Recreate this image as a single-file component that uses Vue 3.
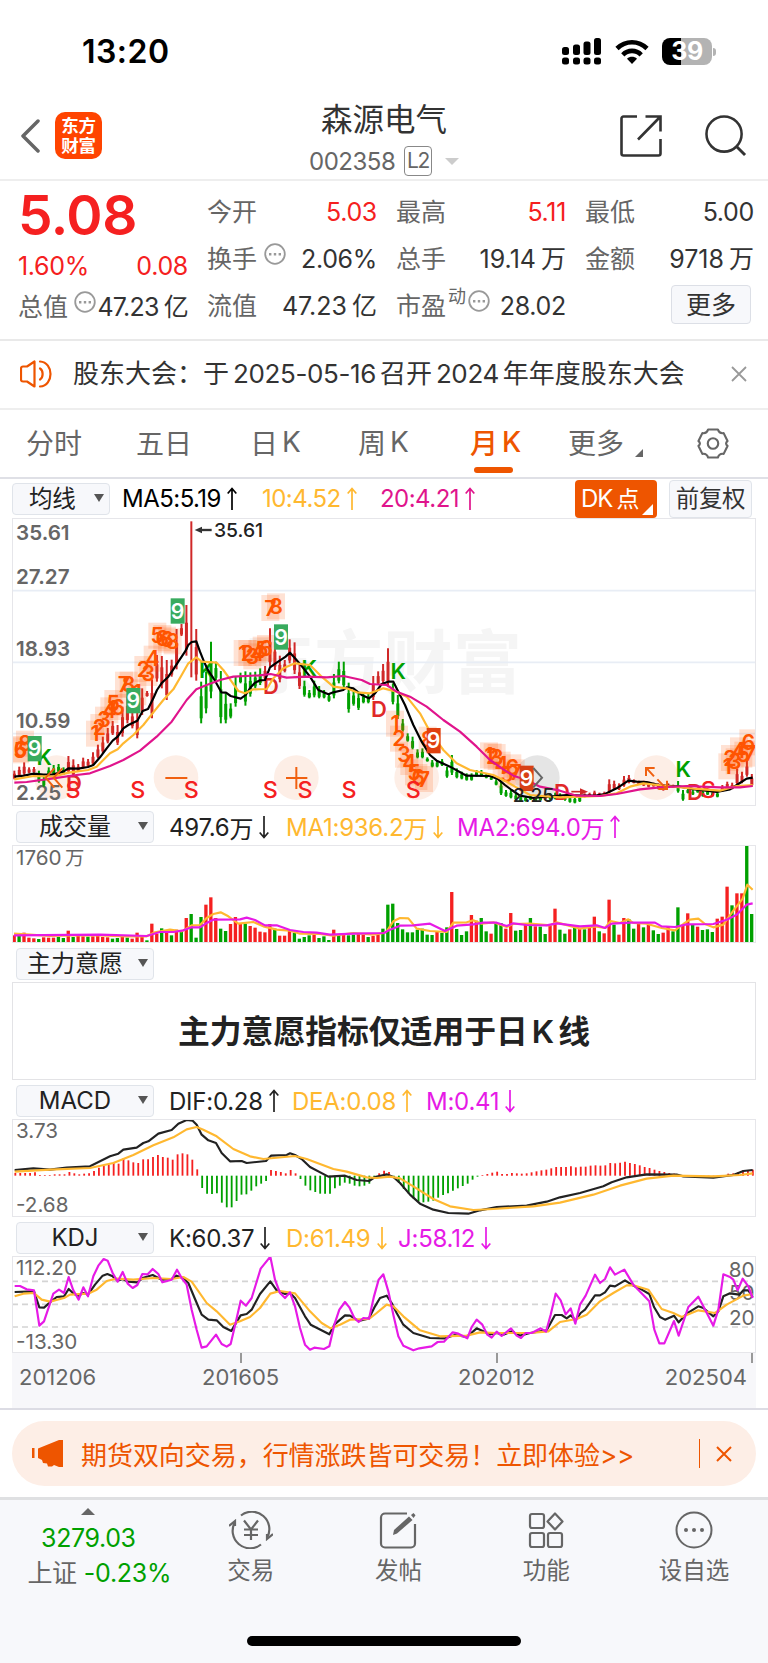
<template>
    <div class="page">
        <div class="statusBar">
            <span class="clock">13:20</span>
            <div class="statusIcons">
                <svg class="signal" viewBox="0 0 39 27">
                    <rect x="0" y="9" width="7" height="8" rx="2.5" />
                    <rect x="11" y="6.5" width="7" height="10.5" rx="2.5" />
                    <rect x="21.500" y="3.500" width="7" height="13.500" rx="2.5" />
                    <rect x="32" y="0" width="7" height="17" rx="2.5" />
                    <rect v-for="x in [0, 11, 21.5, 32]" :key="x" :x="x" y="19.5" width="7" height="7" rx="2.5" />
                </svg>
                <svg class="wifi" viewBox="0 0 34 26" fill="none" stroke="#000" stroke-width="4.600">
                    <path d="M2 9.500C10.500 1.200 23.500 1.200 32 9.500" />
                    <path d="M7.800 15.800C13 10.500 21 10.500 26.200 15.800" />
                    <path d="M17 25l-5-5.300c2.800-2.600 7.200-2.600 10 0z" fill="#000" stroke="none" />
                </svg>
                <div class="battery"><span>39</span></div>
                <i class="batteryCap"></i>
            </div>
        </div>

        <header>
            <svg class="back" viewBox="0 0 20 34"><path d="M18 2L3 17l15 15" fill="none" stroke="#666" stroke-width="3.500" stroke-linecap="round" stroke-linejoin="round" /></svg>
            <div class="logo"><span>东方</span><span>财富</span></div>
            <div class="stockTitle">
                <h1>森源电气</h1>
                <div class="stockCode">
                    <span class="codeText">002358</span>
                    <span class="level">L2</span>
                    <i class="triDown"></i>
                </div>
            </div>
            <svg class="share" viewBox="0 0 42 42" fill="none" stroke="#333" stroke-width="2.600">
                <path d="M17 1.500H3.500a2 2 0 0 0-2 2v35a2 2 0 0 0 2 2h35a2 2 0 0 0 2-2V24" />
                <path d="M25.500 1.500h15v15M40 2L18 24.500" />
            </svg>
            <svg class="search" viewBox="0 0 43 43" fill="none" stroke="#333" stroke-width="2.600">
                <circle cx="19.500" cy="19.500" r="18" />
                <path d="M32 32l9 9" stroke-width="3" />
            </svg>
        </header>

        <section class="quote">
            <div class="quoteCol main">
                <strong class="price">5.08</strong>
                <div class="change red"><span>1.60%</span><span>0.08</span></div>
                <div class="cell">
                    <label>总值</label>
                    <svg class="dots" viewBox="0 0 22 22"><circle cx="11" cy="11" r="9.800" fill="none" stroke="#999" stroke-width="1.800" /><path d="M5 10h2.400v2.400H5zM9.800 10h2.400v2.400H9.800zM14.600 10H17v2.400h-2.400z" fill="#999" /></svg>
                    <span class="val">47.23<b>亿</b></span>
                </div>
            </div>
            <div class="quoteCol" v-for="(col, index) in quotes" :key="index">
                <div class="cell" v-for="item in col" :key="item.label">
                    <label>{{ item.label }}</label>
                    <small v-if="item.sup">{{ item.sup }}</small>
                    <svg v-if="item.tip" class="dots" viewBox="0 0 22 22"><circle cx="11" cy="11" r="9.800" fill="none" stroke="#999" stroke-width="1.800" /><path d="M5 10h2.400v2.400H5zM9.800 10h2.400v2.400H9.800zM14.600 10H17v2.400h-2.400z" fill="#999" /></svg>
                    <span class="val" :class="{ red: item.red, wide: item.unit }">{{ item.value }}<b v-if="item.unit">{{ item.unit }}</b></span>
                </div>
                <button v-if="index === 2" class="moreBtn">更多</button>
            </div>
        </section>

        <section class="notice">
            <svg class="horn" viewBox="0 0 32 28" fill="none" stroke="#ee5500" stroke-width="2.200" stroke-linejoin="round" stroke-linecap="round">
                <path d="M14.500 1.500v25L7 21.500H3a2 2 0 0 1-2-2v-11a2 2 0 0 1 2-2h4z" />
                <path d="M20 8.500c3.500 2 3.500 9 0 11M20 1.500c14 1 14 24 0 25" />
            </svg>
            <p>股东大会：<span>于</span><em>2025-05-16</em>召开<em>2024</em>年年度股东大会</p>
            <svg class="close" viewBox="0 0 16 16"><path d="M1 1l14 14M15 1L1 15" stroke="#999" stroke-width="1.800" /></svg>
        </section>

        <nav>
            <span class="tab" v-for="tab in tabs" :key="tab.name" :class="[tab.cls, { active: tab.name === activeTab }]" @click="activeTab = tab.name">
                {{ tab.name }}<i v-if="tab.k">K</i>
                <svg v-if="tab.corner" viewBox="0 0 8 8"><path d="M8 0v8H0z" fill="#666" /></svg>
            </span>
            <svg class="gear" viewBox="0 0 32 32" fill="none" stroke="#666" stroke-width="2.200">
                <path d="M11 1.500h10c1 3 3 4.300 6 3.800l4 8.200c-2 1.500-2 3.500 0 5l-4 8.200c-3-.5-5 .8-6 3.800H11c-1-3-3-4.300-6-3.800l-4-8.200c2-1.500 2-3.500 0-5l4-8.200c3 .5 5-.8 6-3.800z" stroke-linejoin="round" />
                <circle cx="16" cy="16" r="5.400" />
            </svg>
        </nav>

        <section class="indicator top">
            <div class="select">均线<i></i></div>
            <div class="values">
                <span v-for="v in maValues" :key="v.text" :class="v.cls">{{ v.text }}
                    <svg class="arrow" viewBox="0 0 10 24"><path :d="v.up ? upArrow : downArrow" /></svg>
                </span>
            </div>
            <div class="dk">DK<b>点</b><svg viewBox="0 0 10 10"><path d="M10 0v10H0z" fill="#fff" /></svg></div>
            <div class="restore">前复权</div>
        </section>

        <!-- price chart, three units per pixel -->
        <svg class="chart price" viewBox="36 24 2232 864">
            <text class="watermark" x="1566" y="534" text-anchor="end">东方财富</text>
            <path d="M36 242H2268M36 457H2268M36 671H2268" stroke="#e8edf5" stroke-width="5" />
            <circle v-for="x in [170, 528, 889, 1250, 1969]" :key="x" :cx="x" cy="803" r="67" fill="#fdeee6" />
            <circle cx="1612" cy="803" r="67" fill="#e5e5e5" />
            <g class="axisText">
                <text v-for="(p, i) in priceLabels" :key="p" x="48" :y="[89, 222, 439, 655, 870][i]">{{ p }}</text>
            </g>
            <path v-for="(c, i) in candles" :key="i" :d="`M${candleX(i)} ${c.top}V${c.bottom}`" :stroke="c.color" stroke-width="6" />
            <path v-for="(c, i) in candles" :key="'b' + i" :d="`M${candleX(i)} ${c.top + (c.bottom - c.top) * .35}V${c.bottom - (c.bottom - c.top) * .12}`" :stroke="c.color" stroke-width="9" v-show="i !== 36" />
            <g v-for="(m, i) in counts" :key="'n' + i">
                <rect :x="m[0] - 27" :y="m[1] - 40" width="54" height="78" fill="#ff5500" opacity=".17" />
                <text class="count" :x="m[0]" :y="m[1] + 22">{{ m[2] }}</text>
            </g>
            <g class="letters">
                <text v-for="(m, i) in letters" :key="'l' + i" :x="m[0]" :y="m[1] + 24" :class="m[2]">{{ m[2] }}</text>
            </g>
            <polyline class="ma black" :points="ma5" />
            <polyline class="ma gold" :points="ma10" />
            <polyline class="ma pink" :points="ma20" />
            <g v-for="(m, i) in nines" :key="'g' + i">
                <rect :x="m[0] - 21" :y="m[1] - 38" width="42" height="76" :fill="m[2]" />
                <text class="nine" :x="m[0]" :y="m[1] + 23">9</text>
            </g>
            <g fill="none" stroke="#f06010" stroke-width="6">
                <path d="M496 804h66M858 804h64M889 771v66M163 775l-26 28 26 30M187 775l-26 28 26 30" />
                <path d="M1962 799l-22-24M1938 798v-24h26M1972 808l27 28M2001 812v25h-26" />
            </g>
            <path d="M1600 774l26 29-26 29" fill="none" stroke="#666" stroke-width="6" />
            <path d="M1714 845h30" stroke="#d02828" stroke-width="5" />
            <path d="M1740 835l24 10-24 10z" fill="#d02828" />
            <path d="M600 60h35" stroke="#333" stroke-width="7" />
            <path d="M584 60l22-10v20z" fill="#333" />
            <text class="extreme" x="642" y="81">35.61</text>
            <text class="extreme" x="1538" y="877">2.25</text>
        </svg>

        <section class="indicator">
            <div class="select wide">成交量<i></i></div>
            <div class="values vol">
                <span v-for="v in volValues" :key="v.text" :class="v.cls">{{ v.text }}<b>万</b>
                    <svg class="arrow" viewBox="0 0 10 24"><path :d="v.up ? upArrow : downArrow" /></svg>
                </span>
            </div>
        </section>
        <svg class="chart volume" viewBox="36 121 2232 294">
            <text class="axisText" x="48" y="182">1760<tspan class="cjk" dx="10">万</tspan></text>
            <rect v-for="(v, i) in volumes" :key="i" :x="37.500 + i * 14.750" :y="v.y" width="10" :height="415 - v.y" :fill="v.color" />
            <polyline class="ma gold" :points="volMa1" />
            <polyline class="ma magenta" :points="volMa2" />
        </svg>

        <section class="indicator">
            <div class="select wide">主力意愿<i></i></div>
        </section>
        <div class="message">主力意愿指标仅适用于日<span>K</span>线</div>

        <section class="indicator">
            <div class="select wide">MACD<i></i></div>
            <div class="values macdValues">
                <span v-for="v in macdValues" :key="v.text" :class="v.cls">{{ v.text }}
                    <svg class="arrow" viewBox="0 0 10 24"><path :d="v.up ? upArrow : downArrow" /></svg>
                </span>
            </div>
        </section>
        <svg class="chart macd" viewBox="36 118 2232 294">
            <path v-for="(y, i) in macdBars" :key="i" :d="`M${46 + i * 14.75} 288V${y}`" :stroke="y > 288 ? '#00a000' : '#f52020'" stroke-width="5.500" />
            <polyline class="ma dark" :points="dif" />
            <polyline class="ma gold" :points="dea" />
            <text class="axisText" x="48" y="176">3.73</text>
            <text class="axisText" x="48" y="397">-2.68</text>
        </svg>

        <section class="indicator">
            <div class="select wide">KDJ<i></i></div>
            <div class="values kdjValues">
                <span v-for="v in kdjValues" :key="v.text" :class="v.cls">{{ v.text }}
                    <svg class="arrow" viewBox="0 0 10 24"><path :d="v.up ? upArrow : downArrow" /></svg>
                </span>
            </div>
        </section>
        <svg class="chart kdj" viewBox="36 529 2232 291">
            <path d="M36 605H2268M36 674H2268M36 742H2268" stroke="#d4d4d4" stroke-width="5" stroke-dasharray="18 12" />
            <text class="axisText" x="48" y="586">112.20</text>
            <text class="axisText" x="48" y="808">-13.30</text>
            <g class="axisText" text-anchor="end">
                <text x="2264" y="592">80</text>
                <text x="2264" y="662">50</text>
                <text x="2264" y="735">20</text>
            </g>
            <polyline class="ma dark" :points="kLine" />
            <polyline class="ma gold" :points="dLine" />
            <polyline class="ma magenta" :points="jLine" />
        </svg>
        <div class="dates">
            <span>201206</span>
            <span class="tick">201605</span>
            <span class="tick">202012</span>
            <span class="tick last">202504</span>
        </div>

        <div class="promoWrap">
            <div class="promo">
                <svg class="megaphone" viewBox="0 0 31 27" fill="#ee5500">
                    <path d="M0 8h2.500v10H0zM6 8.500L27 0h4v27h-4l-5-2-2 1.500h-4l-1-3-4-.5-1-3-4-2z" />
                </svg>
                <p>期货双向交易，行情涨跌皆可交易！立即体验&gt;&gt;</p>
                <i class="divider"></i>
                <svg class="close" viewBox="0 0 16 16"><path d="M1 1l14 14M15 1L1 15" stroke="#ee5500" stroke-width="2" /></svg>
            </div>
        </div>

        <footer>
            <div class="bottomBar">
                <div class="index">
                    <i class="triUp"></i>
                    <span class="green points">3279.03</span>
                    <span class="percent">上证<em>-0.23%</em></span>
                </div>
                <div class="action">
                    <svg viewBox="0 0 44 38" fill="none" stroke="#666" stroke-width="2.200">
                        <path d="M12 4.500A17.500 17.500 0 0 1 38 27M32 33.500A17.500 17.500 0 0 1 6 11" />
                        <path d="M0 15l6-5v5M44 23l-6 5v-5" />
                        <path d="M15 9.500l7 9 7-9M22 18.500V29M15 18.500h14M15 24h14" />
                    </svg>
                    <span>交易</span>
                </div>
                <div class="action">
                    <svg viewBox="0 0 44 38" fill="none" stroke="#666" stroke-width="2.200">
                        <path d="M31 2.500H9a4 4 0 0 0-4 4v26a4 4 0 0 0 4 4h26a4 4 0 0 0 4-4V13" />
                        <path d="M17 24l1-5L33 5.500l3.500 3.500L21 22.500z" fill="#666" stroke="none" />
                        <path d="M35 4l2.500-2 2 2.200L37.500 7z" fill="#666" stroke="none" />
                    </svg>
                    <span>发帖</span>
                </div>
                <div class="action">
                    <svg viewBox="0 0 44 38" fill="none" stroke="#666" stroke-width="2.200">
                        <rect x="6" y="3" width="14" height="14" rx="2" />
                        <rect x="6" y="22" width="14" height="14" rx="2" />
                        <rect x="24" y="22" width="14" height="14" rx="2" />
                        <path d="M31 2.500l7.500 8-7.500 8-7.500-8z" stroke-linejoin="round" />
                    </svg>
                    <span>功能</span>
                </div>
                <div class="action">
                    <svg viewBox="0 0 44 38" fill="none" stroke="#666" stroke-width="2">
                        <circle cx="22" cy="19" r="17.500" />
                        <g fill="#666" stroke="none"><circle cx="14" cy="19" r="2" /><circle cx="22" cy="19" r="2" /><circle cx="30" cy="19" r="2" /></g>
                    </svg>
                    <span>设自选</span>
                </div>
            </div>
            <div class="homeIndicator"></div>
        </footer>
    </div>
</template>

<script setup>
    import { ref } from 'vue';

    const RED = '#d02828';
    const GREEN = '#00a000';

    const upArrow = 'M5 23V1.500M.7 6.500L5 1.500l4.300 5';
    const downArrow = 'M5 1v21.500M.7 17.500L5 22.500l4.300-5';

    const quotes = [
        [
            { label: '今开', value: '5.03', red: true },
            { label: '换手', value: '2.06%', tip: true },
            { label: '流值', value: '47.23', unit: '亿' }
        ],
        [
            { label: '最高', value: '5.11', red: true },
            { label: '总手', value: '19.14', unit: '万' },
            { label: '市盈', sup: '动', value: '28.02', tip: true }
        ],
        [
            { label: '最低', value: '5.00' },
            { label: '金额', value: '9718', unit: '万' }
        ]
    ];

    const activeTab = ref('月');
    const tabs = [
        { name: '分时', cls: 't1' },
        { name: '五日', cls: 't2' },
        { name: '日', k: true, cls: 't3' },
        { name: '周', k: true, cls: 't4' },
        { name: '月', k: true, cls: 't5' },
        { name: '更多', corner: true, cls: 't6' }
    ];

    const maValues = [
        { text: 'MA5:5.19', cls: 'black', up: true },
        { text: '10:4.52', cls: 'gold', up: true },
        { text: '20:4.21', cls: 'pink', up: true }
    ];
    const volValues = [
        { text: '497.6', cls: 'dark', up: false },
        { text: 'MA1:936.2', cls: 'gold', up: false },
        { text: 'MA2:694.0', cls: 'magenta', up: true }
    ];
    const macdValues = [
        { text: 'DIF:0.28', cls: 'dark', up: true },
        { text: 'DEA:0.08', cls: 'gold', up: true },
        { text: 'M:0.41', cls: 'magenta', up: false }
    ];
    const kdjValues = [
        { text: 'K:60.37', cls: 'dark', up: false },
        { text: 'D:61.49', cls: 'gold', up: false },
        { text: 'J:58.12', cls: 'magenta', up: false }
    ];

    const priceLabels = ['35.61', '27.27', '18.93', '10.59', '2.25'];

    // high-low range of each month; r = up, g = down
    const candleData = `782-808r 770-798r 757-795r 772-790r 771-788r 782-818g 795-830g 772-800g 765-795g 762-788g 772-795g
        738-790r 748-800r 762-785r 743-775r 747-770r 727-765r 704-745r 680-730r 654-700r 633-675r 645-705r 590-680r 560-640r
        600-655r 600-685r 535-615r 543-560r 508-625r 435-515r 438-535r 450-570r 449-500r 357-478r 342-378r 285-437r 34-502r
        357-512r 515-640g 485-610g 395-565g 455-510g 483-640g 550-640g 580-625g 500-590g 488-520g 484-587g 487-560g 485-535g
        475-525g 468-510r 355-470r 395-480r 437-517r 450-487r 388-460r 397-492r 460-537r 512-560g 540-565g 512-562g 528-565g
        540-565g 550-575g 492-565g 455-520g 455-535g 518-608g 540-587g 545-600g 550-580g 550-580g 498-570r 484-525r 462-520r
        415-530r 520-583g 555-627g 627-665g 670-695g 680-718g 718-745g 715-745g 742-755g 750-772g 750-772g 747-768g 770-803g
        735-795g 775-805g 785-808g 790-812g 790-812g 780-800g 780-800g 790-805g 798-810g 808-826g 812-855g 840-860g 840-865g
        850-870g 855-875g 858-875g 855-870g 860-875g 858-872g 855-868r 850-870g 848-868g 850-866g 855-872g 858-878g 860-880g
        855-876g 850-862r 848-860r 842-858r 848-856r 845-858r 808-850r 812-840r 820-840r 798-830r 795-820r 808-820r 812-825r
        812-828r 815-832r 818-830r 820-838r 823-842r 820-832r 824-834r 813-848g 840-872g 835-850g 840-855g 838-848g 838-860g
        840-855g 845-860g 845-862g 825-845r 815-835r 818-838r 775-825r 785-820r 753-800r 792-830r`;
    const candles = candleData.split(/\s+/).map((s) => {
        const [top, bottom] = s.split('-').map((n) => parseInt(n));
        return { top, bottom, color: s.endsWith('r') ? RED : GREEN };
    });
    const candleX = (i) => 43 + i * 14.75;

    const volumeData = `392r 392g 384r 399r 401r 403g 398r 399r 399r 397g 400g 378r 397g 394r 395r 396g 395r 393r 397r 398r 402g 400g
        397r 399g 402r 384r 395r 407g 357r 388r 371g 380r 392g 375r 378g 340r 328g 399g 337g 300r 278r 340r 372g 379g 358r 337r
        358r 357g 364r 369r 381r 383r 358r 372g 393r 393r 379r 385g 402g 397g 392g 390r 400g 395g 406g 375r 388g 391r 392g 390g
        388r 390r 397g 394r 389r 372g 300g 297g 355g 374g 383g 383g 375g 372g 390g 391g 380r 385g 368g 262r 373g 391g 380g 331r
        348r 340g 380g 387r 355g 355g 372r 325r 378g 376g 360r 340g 365r 366g 388g 362r 312r 375g 387g 374r 365g 370r 374g 368r
        336r 380g 386r 285r 360g 390r 340r 343g 372g 358r 368g 360r 377g 388g 384r 366r 380g 308g 362r 326r 358g 366r 376g 374g
        382g 342r 336r 246r 302g 266r 266r 122g 328g`;
    const volumes = volumeData.split(/\s+/).map((s) => ({ y: parseInt(s), color: s.endsWith('r') ? '#f52020' : GREEN }));

    const macdBars = [280, 280, 280, 280, 278, 286, 286, 286, 284, 284, 284, 277, 281, 284, 282, 281, 274, 264, 258, 255, 248, 252,
        236, 242, 248, 250, 239, 239, 232, 226, 232, 234, 240, 224, 221, 224, 240, 269, 325, 342, 343, 341, 369, 383, 383, 364, 345,
        344, 333, 320, 312, 304, 271, 274, 277, 281, 271, 281, 298, 318, 332, 337, 342, 342, 342, 326, 318, 309, 312, 318, 320, 318,
        312, 294, 281, 273, 277, 294, 310, 328, 342, 357, 365, 368, 366, 363, 354, 346, 341, 333, 326, 319, 312, 300, 291, 286, 283,
        279, 276, 283, 283, 280, 281, 282, 281, 278, 275, 272, 270, 266, 262, 262, 262, 260, 263, 261, 261, 258, 257, 258, 257, 250,
        251, 249, 246, 250, 253, 257, 262, 265, 270, 274, 277, 280, 282, 287, 287, 287, 287, 287, 287, 287, 287, 287, 286, 282, 281,
        278, 272, 271, 270];

    const counts = [
        [60, 722, 5], [62, 718, 6], [75, 702, 8],
        [285, 672, 1], [298, 652, 2], [312, 630, 3], [328, 602, 4], [340, 580, 5], [354, 592, 6], [372, 525, 7], [386, 525, 8],
        [412, 548, 1], [430, 478, 2], [445, 490, 3], [458, 447, 4], [472, 378, 5], [487, 385, 6], [501, 390, 6], [518, 395, 8],
        [728, 430, 1], [742, 430, 2], [757, 440, 3], [772, 430, 4], [785, 420, 5], [798, 415, 6], [811, 295, 7], [828, 290, 8],
        [1185, 642, 1], [1197, 687, 2], [1212, 735, 3], [1228, 757, 4], [1242, 788, 5], [1255, 802, 6], [1272, 808, 7], [1283, 690, 8],
        [1467, 737, 1], [1478, 740, 2], [1490, 742, 3], [1505, 765, 4], [1520, 795, 5], [1537, 773, 6], [1547, 788, 7],
        [2182, 770, 1], [2190, 745, 2], [2204, 755, 3], [2217, 722, 4], [2230, 735, 5], [2245, 698, 6], [2250, 732, 7]
    ];
    const nines = [
        [104, 716, '#38ab5e'], [400, 572, '#38ab5e'], [533, 303, '#38ab5e'], [843, 381, '#38ab5e'],
        [1301, 692, '#e04010'], [1580, 805, '#d84015']
    ];
    const letters = [
        [133, 742, 'K'], [620, 480, 'K'], [928, 475, 'K'], [1195, 484, 'K'], [2050, 776, 'K'],
        [222, 818, 'D'], [813, 528, 'D'], [1137, 598, 'D'], [1686, 846, 'D'], [2085, 845, 'D'],
        [219, 840, 'S'], [413, 840, 'S'], [574, 840, 'S'], [811, 840, 'S'], [915, 840, 'S'], [1047, 840, 'S'], [1240, 840, 'S'], [2125, 840, 'S']
    ];

    const ma5 = '43,800 72,797 101,791 130,794 160,793 190,785 205,775 235,776 264,771 280,765 300,742 320,715 338,692 353,680 370,655 385,645 412,632 428,603 444,597 460,565 471,540 486,518 505,500 520,478 535,455 555,425 565,405 575,396 589,394 600,425 612,455 625,482 645,512 664,547 678,548 692,558 722,566 737,555 752,532 765,518 780,511 795,510 810,472 830,458 857,440 870,428 885,445 905,468 930,500 955,540 985,553 1000,547 1030,540 1040,532 1060,535 1085,555 1107,565 1125,550 1145,522 1165,515 1180,515 1195,545 1215,585 1240,645 1265,695 1290,735 1310,752 1350,770 1390,792 1400,797 1470,798 1495,808 1515,825 1535,840 1560,857 1600,864 1640,860 1700,855 1750,857 1790,856 1815,852 1850,835 1885,812 1910,815 1940,816 1980,826 2040,830 2085,838 2150,846 2190,838 2215,822 2240,806 2258,803';
    const ma10 = '43,808 101,798 160,800 205,788 264,780 290,770 330,730 353,718 370,700 400,675 430,645 460,607 490,570 520,538 545,495 565,460 589,442 605,455 650,458 670,480 695,515 715,543 735,550 760,538 800,537 820,505 850,475 885,460 930,465 965,500 1000,530 1040,535 1070,547 1110,550 1150,535 1190,545 1220,560 1260,610 1290,665 1330,720 1370,760 1410,780 1480,795 1520,815 1545,830 1590,855 1680,862 1750,860 1800,858 1850,850 1890,830 1930,820 2000,828 2080,836 2160,842 2210,828 2258,825';
    const ma20 = '43,818 80,816 160,805 230,795 270,790 330,768 370,750 420,722 470,680 515,635 560,570 589,538 620,525 660,510 700,500 780,496 812,492 860,503 920,500 980,502 1030,498 1085,510 1110,522 1160,525 1190,545 1230,560 1280,590 1330,630 1380,665 1430,710 1470,750 1510,778 1540,797 1580,810 1620,830 1680,842 1730,857 1800,858 1850,852 1920,838 1980,832 2060,828 2160,832 2220,832 2258,828';

    const volMa1 = '42,387 90,390 150,394 220,392 300,392 380,395 440,395 465,383 510,375 545,380 575,362 600,361 620,340 640,328 662,323 685,335 715,357 760,352 790,365 830,375 870,378 900,387 960,388 1000,393 1060,385 1120,390 1152,385 1160,380 1180,350 1200,340 1225,341 1250,372 1290,379 1340,382 1360,354 1400,353 1420,347 1445,357 1480,353 1520,367 1540,358 1590,357 1650,362 1670,353 1740,372 1785,365 1815,370 1832,349 1860,355 1885,344 1900,355 1940,357 1985,370 2025,377 2050,358 2070,345 2095,342 2115,358 2140,368 2170,360 2200,318 2228,282 2242,240 2258,255';
    const volMa2 = '42,392 300,390 440,394 480,382 520,382 550,377 575,368 600,368 620,355 640,345 720,344 740,339 765,346 795,362 830,362 870,376 910,382 950,384 990,390 1060,387 1152,385 1170,375 1200,363 1240,362 1290,357 1335,379 1370,363 1420,359 1450,354 1490,354 1520,364 1540,356 1580,361 1640,362 1670,356 1740,365 1790,362 1815,370 1835,357 1890,354 1965,354 1985,365 2025,367 2060,359 2140,358 2180,345 2210,330 2240,300 2258,296';

    const dif = '44,271 100,266 150,270 200,264 270,260 300,245 330,230 355,222 370,210 410,204 430,190 445,185 475,162 515,151 535,132 560,121 578,123 590,135 605,165 625,182 648,190 665,220 690,245 725,244 740,250 798,244 813,228 860,226 870,221 885,226 905,238 930,262 985,291 1035,288 1070,301 1107,304 1125,292 1160,284 1180,292 1200,310 1230,345 1260,372 1300,390 1345,400 1405,402 1440,392 1490,382 1580,378 1640,366 1680,353 1740,340 1810,320 1835,308 1880,293 1940,284 2030,285 2050,290 2140,294 2200,286 2230,274 2258,271';
    const dea = '44,276 150,270 270,265 340,250 400,226 460,197 520,173 560,149 590,142 610,150 650,170 700,208 750,230 790,238 885,229 920,238 1000,268 1040,276 1100,293 1130,295 1170,291 1200,296 1240,320 1300,358 1350,380 1420,391 1480,388 1600,380 1680,369 1780,345 1860,318 1940,297 2020,288 2140,290 2220,286 2258,281';

    const kLine = '44,637 102,635 118,683 132,684 150,668 170,652 192,650 206,628 222,643 236,648 250,640 264,645 285,615 308,588 322,583 338,590 353,603 368,598 385,606 412,608 430,594 458,586 485,600 515,598 530,588 550,596 565,610 585,658 605,705 625,720 650,722 670,742 694,754 705,735 722,707 740,703 755,690 780,643 811,605 830,632 855,643 870,640 885,655 915,710 932,735 988,764 1003,735 1035,707 1050,708 1076,724 1107,716 1125,680 1140,655 1160,648 1175,670 1190,700 1210,735 1240,760 1290,775 1335,776 1365,766 1400,772 1430,746 1470,764 1490,760 1510,765 1535,755 1560,768 1590,760 1640,752 1665,706 1685,706 1700,716 1712,707 1727,722 1742,700 1755,690 1785,647 1800,647 1815,638 1830,618 1845,620 1875,602 1895,615 1920,627 1948,643 1962,682 1980,712 1995,720 2022,708 2036,728 2060,702 2095,680 2110,685 2140,710 2155,695 2170,650 2190,641 2218,645 2230,632 2245,632 2258,652';
    const dLine = '44,650 70,642 102,640 125,660 150,666 192,655 210,645 264,642 290,630 320,604 350,597 400,600 460,595 515,598 550,592 575,606 620,670 650,695 690,735 720,725 750,712 780,685 811,642 840,634 885,641 930,695 965,730 992,746 1020,735 1050,720 1107,718 1130,700 1160,675 1180,680 1210,710 1260,752 1320,770 1400,768 1440,758 1490,760 1590,760 1645,755 1680,727 1730,718 1760,705 1800,665 1840,640 1880,617 1900,617 1945,630 1985,688 2020,700 2045,712 2095,692 2145,700 2180,675 2230,648 2258,643';
    const jLine = '44,619 60,619 80,629 102,632 118,738 132,725 160,642 177,630 192,640 206,592 220,632 236,660 250,623 264,650 280,590 295,558 311,538 323,543 338,580 353,606 368,577 383,612 398,625 412,616 427,583 443,584 458,568 475,583 487,608 515,600 531,570 545,595 560,615 575,690 590,750 605,804 620,800 648,765 665,793 680,801 692,793 708,725 722,663 738,678 755,655 782,567 811,531 825,600 840,640 855,655 870,638 885,680 900,745 915,795 930,810 943,804 972,808 988,800 1003,735 1018,690 1035,667 1048,683 1063,715 1076,727 1090,715 1107,717 1122,650 1136,600 1150,584 1165,635 1180,705 1195,770 1210,798 1240,812 1258,806 1295,800 1313,787 1332,786 1358,758 1375,762 1402,776 1415,742 1430,720 1447,735 1462,765 1475,774 1490,756 1505,769 1533,746 1550,768 1563,775 1577,760 1595,760 1622,746 1638,756 1652,705 1667,642 1682,662 1697,704 1712,686 1726,732 1740,675 1757,648 1785,585 1800,610 1815,598 1830,563 1845,585 1873,570 1900,615 1948,665 1963,750 1978,791 1993,791 2022,724 2036,768 2065,682 2095,651 2110,680 2140,738 2155,690 2170,584 2190,592 2200,600 2213,632 2228,597 2245,620 2258,655';
</script>

<style>
    body {
        background-color: #fff;
    }
</style>

<style scoped>
    * {
        box-sizing: border-box;
    }

    .page {
        width: 768px;
        height: 1663px;
        overflow: hidden;

        display: flex;
        flex-direction: column;

        font-family: Inter, "Noto Sans CJK SC", sans-serif;
        color: #333;
        letter-spacing: -.02em;
    }

    .page > * {
        flex-shrink: 0;
    }

    em, i {
        font-style: normal;
    }

    b {
        font-weight: 400;
    }

    p, h1 {
        margin: 0;
    }

    .red { color: #f52020; }
    .green { color: #00a000; }

    /* status bar */
    .statusBar {
        height: 100px;
        padding: 36px 52px 0 82px;

        display: flex;
        justify-content: space-between;
        align-items: flex-start;

        color: #000;
    }

    .clock {
        font-size: 32px;
        line-height: 32px;
        font-weight: 600;
        letter-spacing: .015em;
    }

    .statusIcons {
        padding-top: 2px;

        display: flex;
        align-items: center;
    }

    .signal {
        width: 39px;
        height: 27px;
        margin-right: 14px;
    }

    .wifi {
        width: 34px;
        height: 26px;
        margin-right: 13px;
    }

    .battery {
        width: 50px;
        height: 27px;
        border-radius: 8px;
        background: linear-gradient(to right, #000 39%, #b3b3b3 39%);

        color: #fff;
        font-size: 25px;
        line-height: 27px;
        font-weight: 700;
        text-align: center;
    }

    .batteryCap {
        width: 3px;
        height: 8px;
        margin-left: 1px;
        border-radius: 0 4px 4px 0;
        background-color: #b3b3b3;
    }

    /* header */
    header {
        height: 81px;
        padding: 0 21px 0 20px;
        border-bottom: 2px solid #eee;

        display: flex;
        align-items: flex-start;
    }

    .back {
        width: 20px;
        height: 34px;
        margin-top: 19px;
    }

    .logo {
        width: 47px;
        height: 47px;
        margin: 12px 0 0 15px;
        padding-top: 4px;
        border-radius: 10px;
        background-color: #ff4400;

        display: flex;
        flex-direction: column;
        align-items: center;

        color: #fff;
        font-size: 17.5px;
        line-height: 19.5px;
        font-weight: 700;
    }

    .stockTitle {
        width: 202px;
        margin-left: 181px;

        display: flex;
        flex-direction: column;
        align-items: center;
    }

    h1 {
        font-size: 31.5px;
        line-height: 39px;
        font-weight: 400;
        letter-spacing: 0;
    }

    .stockCode {
        height: 30px;
        margin-top: 7px;

        display: flex;
        align-items: center;

        color: #666;
        font-size: 24px;
    }

    .codeText {
        width: 88px;
        letter-spacing: -.02em;
    }

    .level {
        width: 28px;
        height: 30px;
        margin: 0 13px 0 7px;
        border: 1.5px solid #888;
        border-radius: 4px;

        font-size: 21px;
        line-height: 28px;
        text-align: center;
        letter-spacing: -.06em;
    }

    .triDown {
        border: 7px solid transparent;
        border-top-color: #ccc;
        border-bottom: 0;
    }

    .share {
        width: 42px;
        height: 42px;
        margin: 15px 43px 0 135px;
    }

    .search {
        width: 42px;
        height: 42px;
        margin-top: 15px;
    }

    /* quote grid */
    .quote {
        height: 160px;
        padding: 0 14px 0 18px;
        border-bottom: 2px solid #e9e9e9;

        display: grid;
        grid-template-columns: 170px 169px 169px 168px;
        gap: 20px;

        font-size: 25px;
    }

    .quoteCol {
        padding-top: 14px;
    }

    .cell {
        height: 47px;

        display: flex;
        align-items: center;
        line-height: 34px;
    }

    .cell:first-child {
        height: 34px;
        margin-bottom: 6px;
    }

    label {
        margin-left: -1px;
        color: #666;
        letter-spacing: 0;
    }

    .val {
        margin-left: auto;
        white-space: nowrap;
    }

    .val b {
        margin-left: 5px;
    }

    .val.wide {
        letter-spacing: 0;
    }

    small {
        align-self: flex-start;
        margin-left: 2px;

        color: #666;
        font-size: 18px;
        line-height: 30px;
    }

    .dots {
        width: 22px;
        height: 22px;
        margin: -10px 0 0 7px;
        flex-shrink: 0;
    }

    small + .dots {
        margin-left: 2px;
    }

    .quoteCol.main {
        padding-top: 11px;
    }

    .price {
        display: block;
        height: 46px;

        color: #f52020;
        font-size: 55px;
        line-height: 46px;
        font-weight: 600;
        letter-spacing: -.008em;
    }

    .change {
        height: 44px;
        margin-top: 6px;

        display: flex;
        justify-content: space-between;
        align-items: center;
        line-height: 44px;
    }

    .main .cell {
        height: 34px;
        margin-top: 2px;
    }

    .main label {
        margin-left: 0;
    }

    .main .cell .val {
        letter-spacing: -.03em;
    }

    .main .dots {
        margin-left: 6px;
    }

    .moreBtn {
        display: block;
        width: 80px;
        height: 39px;
        margin: 3px 3px 0 auto;
        padding: 0;
        border: 1.5px solid #dcdfe6;
        border-radius: 4px;
        background-color: #f7f8fb;

        color: #333;
        font-family: inherit;
        font-size: 25px;
        line-height: 34px;
    }

    /* notice */
    .notice {
        height: 69px;
        padding: 0 21px 2px 20px;
        border-bottom: 2px solid #eee;

        display: flex;
        align-items: center;
    }

    .horn {
        width: 32px;
        height: 28px;
        margin-right: 21px;
    }

    .notice p {
        flex: 1;

        font-size: 26px;
        line-height: 36px;
        white-space: nowrap;
        letter-spacing: 0;
    }

    .notice em {
        margin: 0 4px;
        letter-spacing: -.015em;
    }

    .close {
        width: 16px;
        height: 16px;
    }

    /* period tabs */
    nav {
        height: 69px;
        border-bottom: 2px solid #dfe0e6;

        display: flex;
        align-items: center;
    }

    .tab {
        position: relative;
        height: 66px;
        padding-bottom: 3px;

        display: flex;
        align-items: center;

        color: #666;
        font-size: 28px;
        letter-spacing: 0;
        white-space: nowrap;
        cursor: pointer;
    }

    .tab i {
        margin-left: 4px;
    }

    .t1 { width: 110px; margin-left: 26px; }
    .t2 { width: 114px; }
    .t3 { width: 108px; }
    .t4 { width: 112px; }
    .t5 { width: 98px; }
    .t6 { width: 129px; }

    .tab svg {
        width: 8px;
        height: 8px;
        margin: 22px 0 0 11px;
    }

    .tab.active {
        color: #ee5500;
        font-weight: 500;
    }

    .tab.active::after {
        content: "";
        position: absolute;
        left: 4px;
        bottom: 4px;

        width: 39px;
        height: 6px;
        border-radius: 3px;
        background-color: #ee5500;
    }

    .gear {
        width: 32px;
        height: 31px;
    }

    /* indicator headers */
    .indicator {
        height: 39px;
        padding: 3px 0 0 16px;

        display: flex;
        align-items: center;

        font-size: 24px;
    }

    .indicator.top {
        padding: 0 0 0 12px;
    }

    .select {
        position: relative;
        width: 98px;
        height: 32px;
        padding-left: 16px;
        border: 1.5px solid #e0e4ea;
        border-radius: 4px;
        background-color: #f7f8fb;

        color: #222;
        font-size: 23.5px;
        line-height: 29px;
    }

    .select.wide {
        width: 138px;
        padding: 0 20px 0 0;

        font-size: 24px;
        text-align: center;
        letter-spacing: 0;
    }

    .select i {
        position: absolute;
        right: 5px;
        top: 10px;

        border: 5px solid transparent;
        border-top: 8px solid #555;
        border-bottom: 0;
    }

    .values {
        margin-left: 15px;

        display: flex;
        align-items: center;
        white-space: nowrap;
    }

    .values span {
        display: flex;
        align-items: center;
        letter-spacing: -.01em;
    }

    .top .values {
        width: 453px;
        margin-left: 12px;
    }

    .top .values span {
        letter-spacing: -.022em;
    }

    .top .values span:nth-child(1) { width: 140px; }
    .top .values span:nth-child(2) { width: 118px; }

    .vol span:nth-child(1) { width: 117px; }
    .vol span:nth-child(2) { width: 171px; }
    .macdValues span:nth-child(1) { width: 123px; }
    .macdValues span:nth-child(2) { width: 134px; }
    .kdjValues span:nth-child(1) { width: 117px; }
    .kdjValues span:nth-child(2) { width: 112px; }

    .arrow {
        width: 10px;
        height: 24px;
        margin-left: 6px;

        fill: none;
        stroke: currentColor;
        stroke-width: 1.7;
    }

    span.black { color: #000; }
    span.dark { color: #222; }
    span.gold { color: #ffb830; }
    span.pink { color: #e0148c; }
    span.magenta { color: #e61ae6; }

    .dk {
        position: relative;
        width: 82px;
        height: 38px;
        padding-left: 6px;
        border-radius: 4px;
        background-color: #ee5500;

        color: #fff;
        line-height: 38px;
        letter-spacing: -.04em;
    }

    .dk b {
        margin-left: 4px;
        font-size: 23px;
    }

    .dk svg {
        position: absolute;
        right: 4px;
        bottom: 3px;

        width: 11px;
        height: 11px;
    }

    .restore {
        width: 83px;
        height: 38px;
        margin-left: 12px;
        border: 1.5px solid #e0e4ea;
        border-radius: 4px;
        background-color: #f7f8fb;

        font-size: 23.5px;
        line-height: 35px;
        text-align: center;
    }

    /* charts */
    .chart {
        display: block;
        width: 744px;
        margin-left: 12px;
        outline: 1.5px solid #e6e6ea;
        outline-offset: -1px;
    }

    .chart.price { height: 288px; }
    .chart.volume { height: 98px; }
    .chart.macd { height: 98px; }
    .chart.kdj { height: 97px; }

    .axisText {
        fill: #666;
        font-size: 62px;
        letter-spacing: 0;
    }

    .axisText .cjk {
        font-size: 58px;
    }

    .watermark {
        fill: #f5f5f5;
        font-size: 208px;
        font-weight: 700;
        letter-spacing: 0;
    }

    .ma {
        fill: none;
        stroke-width: 6.5;
        stroke-linejoin: round;
    }

    .ma.black { stroke: #000; }
    .ma.dark { stroke: #222; }
    .ma.gold { stroke: #ffb830; }
    .ma.pink { stroke: #e0148c; }
    .ma.magenta { stroke: #e61ae6; }

    .count, .nine, .letters text {
        font-size: 64px;
        text-anchor: middle;
        letter-spacing: 0;
    }

    .count { fill: #ff5500; }
    .nine { fill: #fff; }

    .letters text { font-size: 66px; }
    .letters .K { fill: #00a000; }
    .letters .D { fill: #e02828; }
    .letters .S { fill: #f52020; font-weight: 500; font-size: 70px; }

    .extreme {
        fill: #222;
        font-size: 58px;
        font-weight: 500;
        letter-spacing: 0;
    }

    .message {
        width: 744px;
        height: 98px;
        margin-left: 12px;
        border: 1.5px solid #e3e3e6;

        color: #222;
        font-size: 31.8px;
        line-height: 98px;
        font-weight: 700;
        letter-spacing: 0;
        text-align: center;
    }

    .message span {
        margin: 0 4px;
        font-weight: 600;
    }

    .dates {
        width: 744px;
        height: 55px;
        margin-left: 12px;
        padding: 0 9px 0 7px;
        background-color: #f7f7fa;

        display: grid;
        grid-template-columns: 183px 256px 213px 76px;

        color: #666;
        font-size: 22px;
        line-height: 48px;
        letter-spacing: 0;
    }

    .dates span {
        position: relative;
        white-space: nowrap;
    }

    .dates .last {
        justify-self: end;
    }

    .dates .tick::before {
        content: "";
        position: absolute;
        left: 38px;
        top: 0;

        width: 2px;
        height: 10px;
        background-color: #999;
    }

    .dates .last::before {
        left: auto;
        right: -6px;
    }

    /* promotion */
    .promoWrap {
        height: 89px;
        padding: 11px 12px 0 12px;
        border-top: 2px solid #dcdce4;
    }

    .promo {
        height: 65px;
        padding: 0 24px 0 20px;
        border-radius: 33px;
        background-color: #fdeee6;

        display: flex;
        align-items: center;

        color: #ee5500;
        font-size: 26px;
        white-space: nowrap;
    }

    .megaphone {
        width: 31px;
        height: 27px;
        margin-right: 18px;
    }

    .promo p {
        flex: 1;
        letter-spacing: -.002em;
    }

    .divider {
        width: 1.5px;
        height: 29px;
        margin-right: 16px;
        background-color: #ee5500;
    }

    /* bottom bar */
    footer {
        height: 166px;
        border-top: 3px solid #dfe0e2;
        background-color: #f7f8fb;
    }

    .bottomBar {
        height: 136px;

        display: flex;
    }

    .index {
        width: 177px;
        padding-top: 8px;

        display: flex;
        flex-direction: column;
        align-items: center;

        font-size: 25px;
    }

    .triUp {
        border: 7px solid transparent;
        border-top: 0;
        border-bottom-color: #666;
    }

    .points {
        margin-top: 7px;
        line-height: 32px;
        letter-spacing: -.015em;
    }

    .percent {
        margin: 0 0 0 22px;
        line-height: 38px;
        white-space: nowrap;
        color: #666;
    }

    .percent em {
        margin-left: 7px;
        color: #00a000;
        letter-spacing: -.01em;
    }

    .action {
        width: 148px;
        padding-top: 11px;

        display: flex;
        flex-direction: column;
        align-items: center;

        color: #666;
        font-size: 23.5px;
        line-height: 34px;
        letter-spacing: 0;
    }

    .action svg {
        width: 44px;
        height: 38px;
        margin-bottom: 5px;
    }

    .homeIndicator {
        width: 274px;
        height: 10px;
        margin: 0 auto;
        border-radius: 5px;
        background-color: #000;
    }
</style>
